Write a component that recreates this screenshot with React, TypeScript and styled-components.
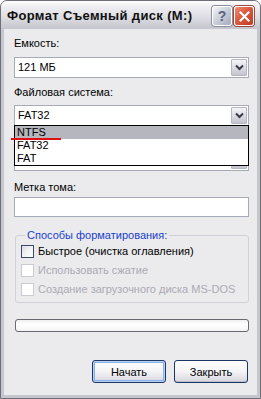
import styled, { createGlobalStyle } from 'styled-components';

const GlobalStyle = createGlobalStyle`
  html, body {
    margin: 0;
    padding: 0;
    background: #ffffff;
  }
  * {
    box-sizing: border-box;
  }
`;

const Window = styled.div`
  width: 261px;
  height: 399px;
  display: flex;
  flex-direction: column;
  border: 1px solid #6e6e78;
  border-radius: 7px 7px 0 0;
  background: #c6c6ce;
  font-family: "Liberation Sans", Arial, sans-serif;
  font-size: 11px;
  color: #000;
  overflow: hidden;
`;

const TitleBar = styled.div`
  height: 28px;
  flex-shrink: 0;
  display: flex;
  align-items: center;
  justify-content: space-between;
  padding: 0 6px 0 6px;
  background: linear-gradient(to bottom, #ffffff 0%, #eeeef2 20%, #dcdce2 60%, #c4c4cc 100%);
`;

const Title = styled.span`
  font-weight: bold;
  font-size: 13px;
  color: #101010;
  letter-spacing: 0.35px;
  padding-top: 1px;
`;

const TitleButtons = styled.div`
  display: flex;
  gap: 2px;
  padding-top: 2px;
`;

const CaptionButton = styled.div<{ $close?: boolean }>`
  width: 20px;
  height: 20px;
  border: 1px solid #fff;
  border-radius: 3px;
  display: flex;
  align-items: center;
  justify-content: center;
  background: ${(p) =>
    p.$close
      ? 'linear-gradient(135deg, #f08c70 0%, #dc5a3e 45%, #c23a22 100%)'
      : 'linear-gradient(135deg, #f2f4fa 0%, #c9ceda 50%, #a4abbe 100%)'};
  box-shadow: 0 0 0 1px ${(p) => (p.$close ? '#9a4a3e' : '#8a8e9e')};
  font-weight: bold;
  font-size: 14px;
  color: #5a627a;
`;

const Body = styled.div`
  flex: 1;
  margin: 0 3px 3px 3px;
  background: #ebebed;
  padding: 8px 8px 0 10px;
  display: flex;
  flex-direction: column;
`;

const Label = styled.div<{ $mt?: number; $mb?: number; $hidden?: boolean }>`
  line-height: 13px;
  height: 13px;
  margin-top: ${(p) => p.$mt ?? 0}px;
  margin-bottom: ${(p) => p.$mb ?? 6}px;
  white-space: nowrap;
  visibility: ${(p) => (p.$hidden ? 'hidden' : 'visible')};
`;

const ComboWrap = styled.div`
  position: relative;
`;

const ComboBox = styled.div`
  height: 21px;
  border: 1px solid #a5acb8;
  background: #fff;
  display: flex;
  align-items: center;
  padding: 1px 1px 1px 3px;
  overflow: hidden;
  white-space: nowrap;
`;

const ComboText = styled.span`
  flex: 1;
  line-height: 13px;
`;

const ComboArrow = styled.div`
  width: 16px;
  height: 17px;
  border: 1px solid #b4b8c4;
  border-radius: 1px;
  background: linear-gradient(to bottom, #f4f4f8 0%, #d8d8e0 60%, #c4c4ce 100%);
  display: flex;
  align-items: center;
  justify-content: center;
  flex-shrink: 0;
`;

const DropList = styled.div`
  position: absolute;
  left: 0;
  right: 0;
  top: calc(100% - 1px);
  border: 1px solid #000;
  background: #fff;
  z-index: 2;
`;

const ListRow = styled.div<{ $selected?: boolean }>`
  height: 13px;
  line-height: 13px;
  padding-left: 2px;
  background: ${(p) => (p.$selected ? '#b6b6be' : 'transparent')};
`;

const RedMark = styled.div`
  position: absolute;
  left: -4px;
  top: 12px;
  width: 50px;
  height: 2px;
  background: #e01010;
`;

const TextBox = styled.div`
  height: 20px;
  border: 1px solid #a5acb8;
  background: #fff;
`;

const Group = styled.fieldset`
  margin: 12px 0 0 1px;
  padding: 3px 5px 6px 5px;
  border: 1px solid #d0d0d8;
  border-radius: 3px;
  display: flex;
  flex-direction: column;
  gap: 6px;
  min-inline-size: 0;
`;

const Legend = styled.legend`
  color: #1a3fcc;
  padding: 0 2px;
  margin-left: 4px;
  line-height: 13px;
`;

const CheckRow = styled.label<{ $disabled?: boolean }>`
  display: flex;
  align-items: center;
  gap: 4px;
  height: 13px;
  line-height: 13px;
  color: ${(p) => (p.$disabled ? '#acaab4' : '#000')};
  white-space: nowrap;
`;

const CheckBox = styled.span<{ $disabled?: boolean }>`
  width: 13px;
  height: 13px;
  flex-shrink: 0;
  border: 1px solid ${(p) => (p.$disabled ? '#cacad2' : '#3c4a68')};
  background: ${(p) =>
    p.$disabled ? '#ffffff' : 'linear-gradient(135deg, #dcdce2 0%, #f6f6f8 60%, #ffffff 100%)'};
`;

const Progress = styled.div`
  margin: 16px 0 0 1px;
  height: 13px;
  border: 1px solid #686870;
  border-radius: 3px;
  background: linear-gradient(to bottom, #f0f0f2 0%, #ffffff 40%, #f4f4f6 100%);
`;

const ButtonRow = styled.div`
  margin-top: 28px;
  display: flex;
  justify-content: flex-end;
  gap: 8px;
  padding-right: 1px;
`;

const Button = styled.button<{ $default?: boolean }>`
  width: 74px;
  height: 23px;
  border: 1px solid #1c3766;
  border-radius: 3px;
  background: linear-gradient(to bottom, #ffffff 0%, #f4f4f6 50%, #dcdce4 90%, #c8c8d2 100%);
  box-shadow: ${(p) =>
    p.$default ? 'inset 0 0 0 1px #b8d0f4, inset 0 0 0 2px #8cb0ea' : 'inset 0 -1px 0 #c0c0cc'};
  font-family: "Liberation Sans", Arial, sans-serif;
  font-size: 11px;
  color: #000;
  padding: 0;
`;

const Chevron = () => (
  <svg width="9" height="7" viewBox="0 0 9 7">
    <path d="M1 1.5 L4.5 5 L8 1.5" stroke="#3a3a48" strokeWidth="2" fill="none" />
  </svg>
);

const CloseIcon = () => (
  <svg width="11" height="11" viewBox="0 0 11 11">
    <path d="M1.5 1.5 L9.5 9.5 M9.5 1.5 L1.5 9.5" stroke="#fff" strokeWidth="2.2" strokeLinecap="square" />
  </svg>
);

function Combo({ value }: { value: string }) {
  return (
    <ComboBox>
      <ComboText>{value}</ComboText>
      <ComboArrow>
        <Chevron />
      </ComboArrow>
    </ComboBox>
  );
}

export default function App() {
  return (
    <>
      <GlobalStyle />
      <Window>
        <TitleBar>
          <Title>Формат Съемный диск (M:)</Title>
          <TitleButtons>
            <CaptionButton>?</CaptionButton>
            <CaptionButton $close>
              <CloseIcon />
            </CaptionButton>
          </TitleButtons>
        </TitleBar>
        <Body>
          <Label $mb={7}>Емкость:</Label>
          <Combo value="121 МБ" />

          <Label $mt={8} $mb={6}>Файловая система:</Label>
          <ComboWrap>
            <Combo value="FAT32" />
            <DropList>
              <ListRow $selected>NTFS</ListRow>
              <ListRow>FAT32</ListRow>
              <ListRow>FAT</ListRow>
              <RedMark />
            </DropList>
          </ComboWrap>

          {/* cluster size row sits under the open list */}
          <Label $mt={5} $mb={6} $hidden aria-hidden>
            Размер кластера:
          </Label>
          <Combo value="" />

          <Label $mt={10} $mb={3}>Метка тома:</Label>
          <TextBox />

          <Group>
            <Legend>Способы форматирования:</Legend>
            <CheckRow>
              <CheckBox />
              Быстрое (очистка оглавления)
            </CheckRow>
            <CheckRow $disabled>
              <CheckBox $disabled />
              Использовать сжатие
            </CheckRow>
            <CheckRow $disabled>
              <CheckBox $disabled />
              Создание загрузочного диска MS-DOS
            </CheckRow>
          </Group>

          <Progress />

          <ButtonRow>
            <Button $default>Начать</Button>
            <Button>Закрыть</Button>
          </ButtonRow>
        </Body>
      </Window>
    </>
  );
}
